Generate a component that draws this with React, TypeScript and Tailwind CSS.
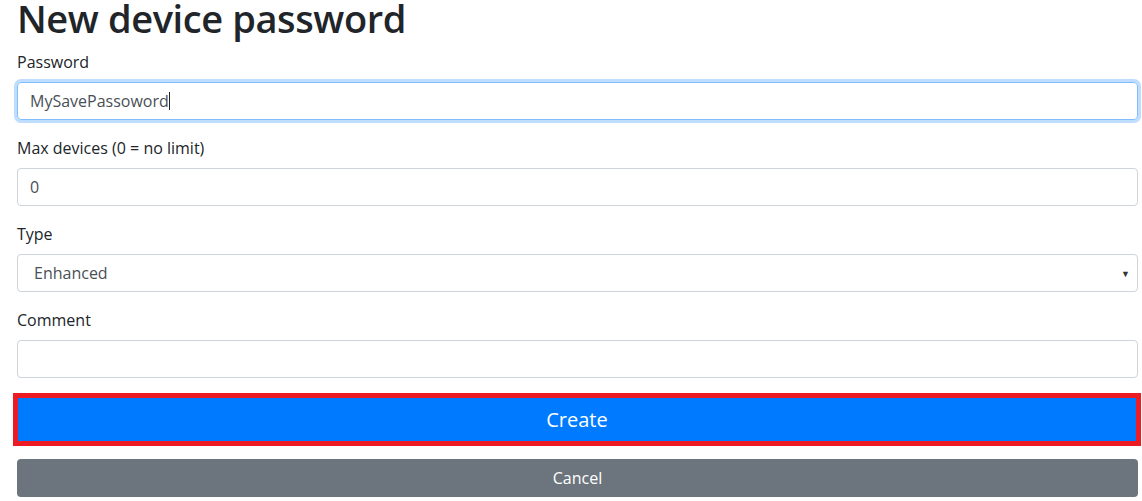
export default function App() {
  return (
    <div className="min-h-screen bg-white pl-[17px] pr-[4px] font-['Open_Sans',sans-serif] text-[#212529] overflow-hidden">
      <h1 className="-mt-[6px] mb-2 text-[38px] font-semibold leading-[48px] tracking-[-0.4px]">New device password</h1>

      <form onSubmit={(e) => e.preventDefault()}>
        <div className="mb-4">
          <label className="mb-2 block text-base leading-6">Password</label>
          <div className="relative">
            <input
              type="text"
              defaultValue="MySavePassoword"
              className="block h-[38px] w-full rounded border border-[#80bdff] px-3 text-base text-[#495057] shadow-[0_0_0_3px_rgba(0,123,255,0.25)] outline-none"
            />
            {/* text caret */}
            <span className="pointer-events-none absolute left-[152px] top-[10px] h-[18px] w-px bg-[#212529]" />
          </div>
        </div>

        <div className="mb-4">
          <label className="mb-2 block text-base leading-6">Max devices (0 = no limit)</label>
          <input
            type="text"
            defaultValue="0"
            className="block h-[38px] w-full rounded border border-[#ced4da] px-3 text-base text-[#495057] outline-none"
          />
        </div>

        <div className="mb-4">
          <label className="mb-2 block text-base leading-6">Type</label>
          <div className="relative">
            <select
              defaultValue="enhanced"
              className="block h-[38px] w-full appearance-none rounded border border-[#ced4da] bg-white px-4 text-base text-[#495057] outline-none"
            >
              <option value="enhanced">Enhanced</option>
              <option value="simple">Simple</option>
            </select>
            <span className="pointer-events-none absolute right-[8px] top-1/2 -translate-y-1/2 text-[9px] leading-none text-[#333]">▼</span>
          </div>
        </div>

        <div className="mb-[15px]">
          <label className="mb-2 block text-base leading-6">Comment</label>
          <input
            type="text"
            className="block h-[38px] w-full rounded border border-[#ced4da] px-3 text-base text-[#495057] outline-none"
          />
        </div>

        <div className="-ml-[4px] -mr-[3px] border-[5px] border-[#ed1c24]">
          <button
            type="submit"
            className="block h-[43px] w-full bg-[#007bff] text-xl text-white"
          >
            Create
          </button>
        </div>

        <button
          type="button"
          className="mt-[13px] block h-[38px] w-full rounded bg-[#6c757d] text-base text-white"
        >
          Cancel
        </button>
      </form>
    </div>
  );
}
